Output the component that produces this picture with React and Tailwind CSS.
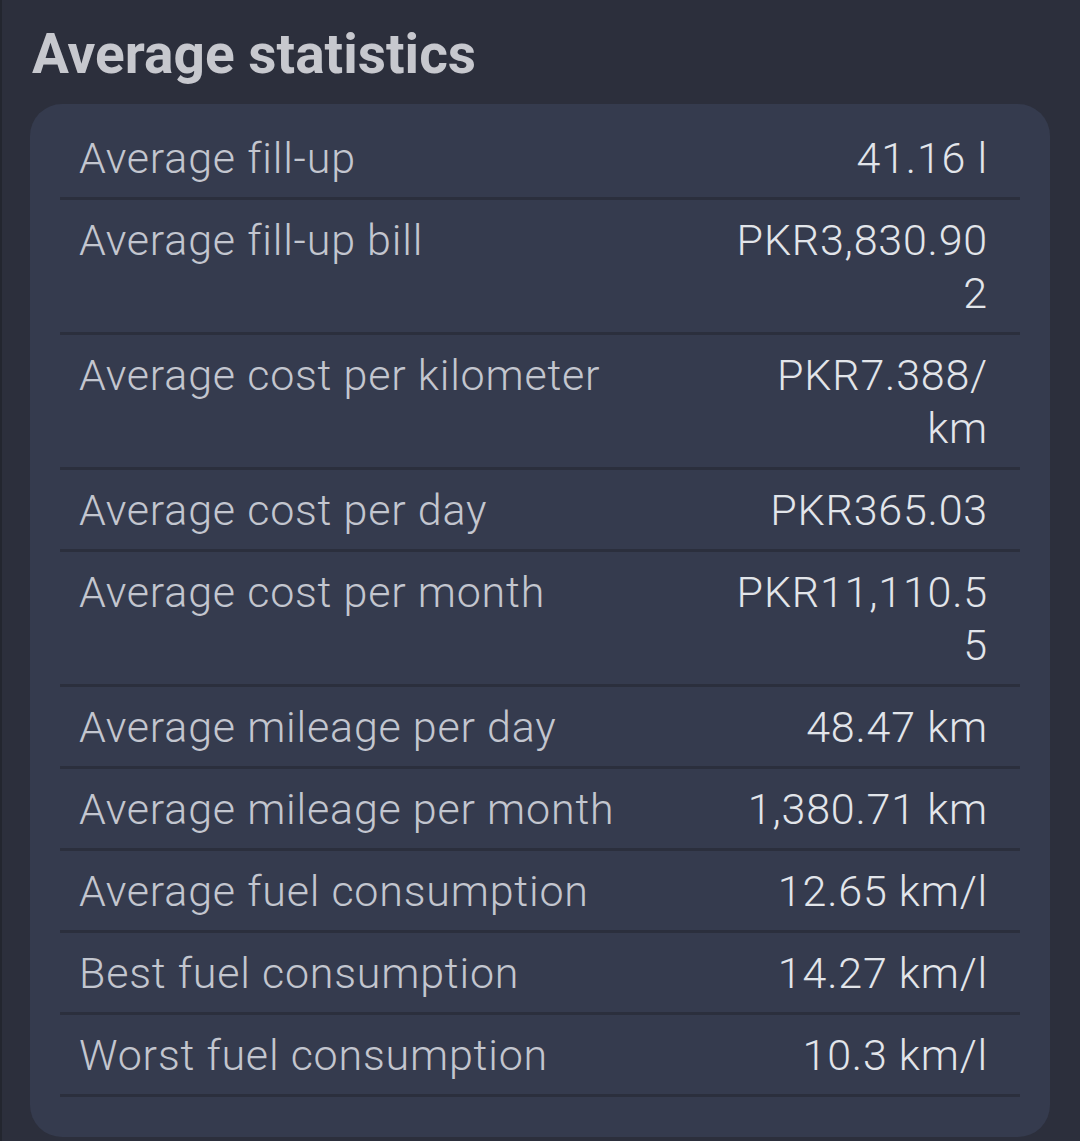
import React from 'react';

// Rows of the average statistics card; values are split into the lines they wrap to
const stats = [
  { label: 'Average fill-up', value: ['41.16 l'] },
  { label: 'Average fill-up bill', value: ['PKR3,830.90', '2'] },
  { label: 'Average cost per kilometer', value: ['PKR7.388/', 'km'] },
  { label: 'Average cost per day', value: ['PKR365.03'] },
  { label: 'Average cost per month', value: ['PKR11,110.5', '5'] },
  { label: 'Average mileage per day', value: ['48.47 km'] },
  { label: 'Average mileage per month', value: ['1,380.71 km'] },
  { label: 'Average fuel consumption', value: ['12.65 km/l'] },
  { label: 'Best fuel consumption', value: ['14.27 km/l'] },
  { label: 'Worst fuel consumption', value: ['10.3 km/l'] },
];

const StatRow = ({ label, value }) => (
  <div className="flex justify-between border-b-[3px] border-[#2b2f3d] pt-[14px] pb-[12px] pl-[19px] pr-[32px]">
    <span className="text-[43px] leading-[53px] font-light tracking-[0.8px] text-[#c3c6cf]">{label}</span>
    <span className="w-[270px] text-right text-[43px] leading-[53px] font-light tracking-[0.8px] text-[#e2e5ea]">
      {value.map((line, i) => (
        <div key={i}>{line}</div>
      ))}
    </span>
  </div>
);

export default function App() {
  return (
    <div
      className="w-[1080px] h-[1141px] overflow-hidden bg-[#2c2f3c] border-l-[2px] border-[#23262f]"
      style={{ fontFamily: 'Roboto, "Noto Sans", sans-serif' }}
    >
      {/* Заголовок */}
      <h1 className="pt-[21px] pl-[30px] text-[55px] leading-[66px] font-bold text-[#c7c8ce]">
        Average statistics
      </h1>

      {/* Карточка со статистикой */}
      <div className="mt-[17px] ml-[28px] mr-[30px] rounded-[32px] bg-[#353b4e] px-[30px] pt-[14px] pb-[40px]">
        {stats.map((s) => (
          <StatRow key={s.label} label={s.label} value={s.value} />
        ))}
      </div>
    </div>
  );
}
